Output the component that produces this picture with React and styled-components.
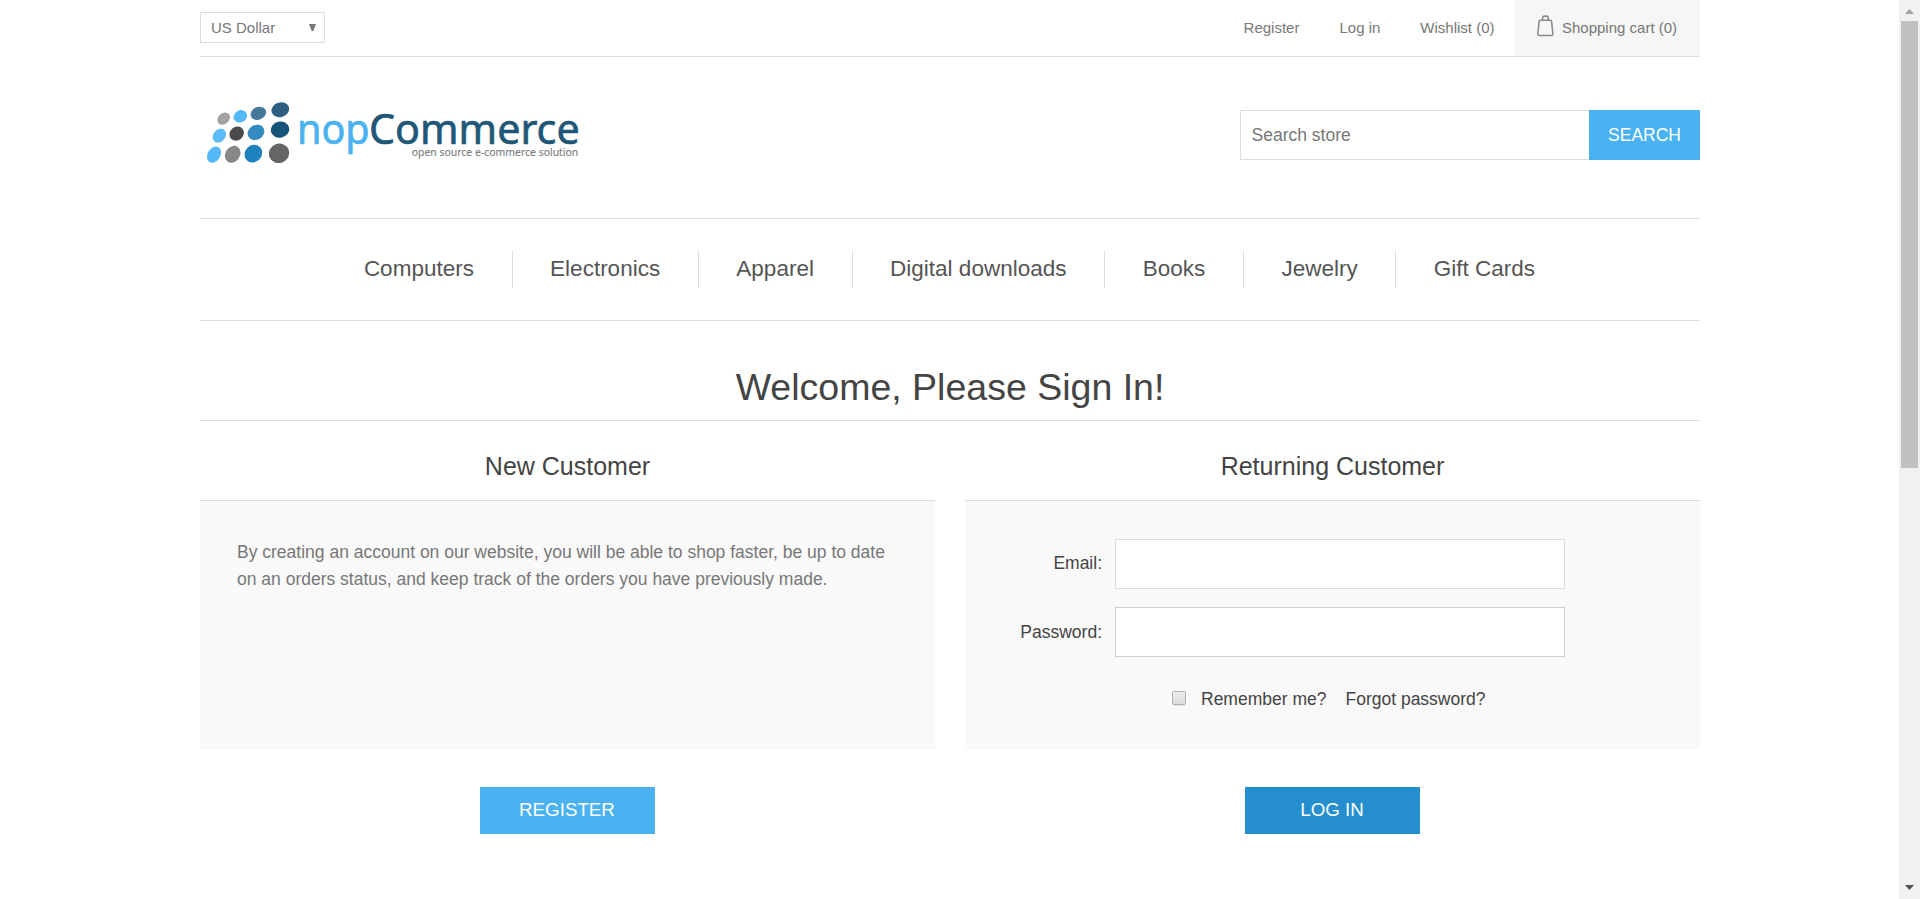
import React from "react";
import styled, { createGlobalStyle } from "styled-components";

const GlobalStyle = createGlobalStyle`
  * { box-sizing: border-box; }
  html, body { margin: 0; padding: 0; overflow: hidden; }
  body {
    background: #fff;
    color: #777;
    font-family: "Liberation Sans", Arial, Helvetica, sans-serif;
    font-size: 17.5px;
  }
  a { color: inherit; text-decoration: none; }
  button, input { font-family: inherit; margin: 0; border-radius: 0; outline: none; }
`;

const Window = styled.div`
  display: flex;
  width: 1920px;
  height: 899px;
  overflow: hidden;
`;

const Viewport = styled.div`
  flex: 1;
  display: flex;
  justify-content: center;
  padding-left: 1px;
`;

const Page = styled.div`
  width: 1500px;
`;

const TopBar = styled.header`
  display: flex;
  justify-content: space-between;
  height: 57px;
  border-bottom: 1px solid #ddd;
  font-size: 15px;
`;

const CurrencySelect = styled.button`
  display: flex;
  align-items: center;
  justify-content: space-between;
  width: 125px;
  height: 31px;
  margin-top: 12px;
  padding: 0 8px 0 10px;
  border: 1px solid #ddd;
  background: #fff;
  color: #777;
  font-size: 15px;
`;

const AccountLinks = styled.nav`
  display: flex;
  line-height: 56px;
`;

const AccountLink = styled.a`
  margin-right: 40px;
  &:nth-child(3) { margin-right: 39.5px; }
`;

const CartLink = styled.a`
  display: flex;
  align-items: center;
  gap: 8px;
  width: 186px;
  margin-left: -20px;
  padding-left: 23px;
  background: #f6f6f6;
  svg { margin-top: -4px; }
`;

const Masthead = styled.div`
  display: flex;
  justify-content: space-between;
  align-items: flex-start;
  height: 161px;
  padding-top: 33px;
`;

const LogoImage = styled.svg`
  display: block;
  overflow: visible;
  font-family: "Noto Sans", "Open Sans", sans-serif;
`;

const SearchForm = styled.div`
  display: flex;
  margin-top: 20px;
`;

const SearchInput = styled.input`
  width: 349px;
  height: 50px;
  padding: 0 10px 0 10.5px;
  border: 1px solid #ddd;
  border-right: 0;
  font-size: 17.5px;
  color: #777;
  &::placeholder { color: #777; opacity: 1; }
`;

const SearchButton = styled.button`
  width: 111px;
  height: 50px;
  padding: 0;
  border: 0;
  background: #4ab2f1;
  color: #fff;
  font-size: 17.5px;
`;

const Menu = styled.nav`
  display: flex;
  justify-content: center;
  align-items: center;
  height: 103px;
  padding-right: 1px;
  border-top: 1px solid #ddd;
  border-bottom: 1px solid #ddd;
`;

const MenuItem = styled.a`
  height: 37px;
  line-height: 36px;
  padding: 0 37.6px;
  color: #555;
  font-size: 22.5px;
  & + & { border-left: 1px solid #ddd; }
`;

const PageTitle = styled.h1`
  height: 100px;
  margin: 0;
  padding-top: 45px;
  border-bottom: 1px solid #ddd;
  color: #444;
  font-size: 37.5px;
  font-weight: normal;
  line-height: 43px;
  text-align: center;
`;

const Columns = styled.main`
  display: flex;
  gap: 30px;
`;

const Column = styled.section`
  display: flex;
  flex-direction: column;
  align-items: center;
  width: 735px;
`;

const ColumnTitle = styled.h2`
  margin: 0;
  height: 79px;
  line-height: 91px;
  color: #444;
  font-size: 25px;
  font-weight: normal;
`;

const Panel = styled.div`
  width: 100%;
  height: 250px;
  padding: 38px 37px 0;
  border-top: 1px solid #ddd;
  background: #f9f9f9;
`;

const Intro = styled.p`
  margin: 0;
  line-height: 27px;
`;

const Field = styled.label`
  display: flex;
  align-items: center;
  height: 50px;
  margin-bottom: 18px;
  color: #444;
`;

const FieldName = styled.span`
  width: 100px;
  margin-right: 13px;
  padding-bottom: ${(p) => p.$lift || 0}px;
  text-align: right;
  white-space: nowrap;
`;

const FieldInput = styled.input`
  width: 450px;
  height: 50px;
  padding: 0 10px;
  border: 1px solid ${(p) => (p.$strong ? "#ccc" : "#ddd")};
  background: #fff;
  font-size: 17.5px;
`;

const LoginOptions = styled.div`
  display: flex;
  align-items: center;
  height: 20px;
  margin-top: 32px;
  padding-left: 170px;
  color: #444;
`;

const Checkbox = styled.span`
  width: 14px;
  height: 14px;
  margin: 0 15px 2px 0;
  border: 1px solid #b2b2b2;
  border-radius: 2px;
  background: linear-gradient(#ededed, #dcdcdc);
  box-shadow: 0 1px 0 #e4e4e4;
`;

const ForgotLink = styled.a`
  margin-left: 19px;
`;

const ActionButton = styled.button`
  width: 175px;
  height: 47px;
  margin-top: 37px;
  padding: 0 1px 1px 0;
  border: 0;
  background: ${(p) => (p.$dark ? "#248ece" : "#4ab2f1")};
  color: #fff;
  font-size: 18.75px;
`;

const ScrollTrack = styled.div`
  display: flex;
  flex-direction: column;
  align-items: center;
  width: 21px;
  background: #f1f1f1;
`;

const ScrollThumb = styled.div`
  width: 17px;
  height: 447px;
  margin-bottom: auto;
  background: #c1c1c1;
`;

const ScrollArrow = styled.svg`
  display: block;
  width: 21px;
  height: 21px;
`;

const dots = [
  [101, 86, 21, 16, -40, "#a0a2a4"],
  [151, 79, 21, 18, -30, "#55b9f8"],
  [205, 70, 24, 19, -25, "#45799c"],
  [271, 59, 27, 22, -18, "#2c5f80"],
  [88, 137, 23, 18, -48, "#5bbcf8"],
  [140, 131, 23, 20, -40, "#4a4a4a"],
  [198, 127, 26, 22, -30, "#338bc2"],
  [270, 119, 28, 24, -12, "#155379"],
  [72, 194, 26, 19, -58, "#55b9f8"],
  [128, 193, 27, 22, -55, "#868789"],
  [190, 191, 28, 25, -45, "#1f82bf"],
  [267, 190, 31, 29, -20, "#646566"],
];

function Logo() {
  return (
    <LogoImage width="390" height="80" viewBox="30 0 1170 240">
      {dots.map(([x, y, rx, ry, angle, fill]) => (
        <ellipse key={`${x}-${y}`} cx={x} cy={y} rx={rx} ry={ry} fill={fill} transform={`rotate(${angle} ${x} ${y})`} />
      ))}
      <text x="321" y="161" fontSize="126" fill="#4ab2f1" stroke="#4ab2f1" strokeWidth="2" textLength="218" lengthAdjust="spacingAndGlyphs">nop</text>
      <text x="537" y="161" fontSize="126" fill="#1f5778" stroke="#1f5778" strokeWidth="2" textLength="632" lengthAdjust="spacingAndGlyphs">Commerce</text>
      <text x="665" y="198" fontSize="34" fill="#7c7f82" stroke="#7c7f82" strokeWidth=".5" textLength="500" lengthAdjust="spacingAndGlyphs">open source e-commerce solution</text>
    </LogoImage>
  );
}

function BagIcon() {
  return (
    <svg width="17" height="22" viewBox="0 0 17 22" fill="none" stroke="#8c8c8c" strokeWidth="1.6" strokeLinejoin="round">
      <path d="M3.2 5.3H13.4Q14.4 5.3 14.5 6.4L15.9 18.6Q16.1 20.5 14.3 20.5H2.5Q.7 20.5 .9 18.6L2.1 6.4Q2.2 5.3 3.2 5.3Z" />
      <path d="M5.6 5.3V3.1Q5.6 1.1 7.6 1.1H9.2Q11.2 1.1 11.2 3.1V5.3" />
    </svg>
  );
}

const categories = ["Computers", "Electronics", "Apparel", "Digital downloads", "Books", "Jewelry", "Gift Cards"];

export default function App() {
  return (
    <Window>
      <GlobalStyle />
      <Viewport>
        <Page>
          <TopBar>
            <CurrencySelect>
              US Dollar
              <svg width="7" height="8" viewBox="0 0 7 8"><path d="M0 0H7L4.3 7H2.7Z" fill="#777" /></svg>
            </CurrencySelect>
            <AccountLinks>
              <AccountLink href="#">Register</AccountLink>
              <AccountLink href="#">Log in</AccountLink>
              <AccountLink href="#">Wishlist (0)</AccountLink>
              <CartLink href="#"><BagIcon />Shopping cart (0)</CartLink>
            </AccountLinks>
          </TopBar>
          <Masthead>
            <Logo />
            <SearchForm>
              <SearchInput placeholder="Search store" />
              <SearchButton>SEARCH</SearchButton>
            </SearchForm>
          </Masthead>
          <Menu>
            {categories.map((name) => <MenuItem key={name} href="#">{name}</MenuItem>)}
          </Menu>
          <PageTitle>Welcome, Please Sign In!</PageTitle>
          <Columns>
            <Column>
              <ColumnTitle>New Customer</ColumnTitle>
              <Panel>
                <Intro>
                  By creating an account on our website, you will be able to shop faster, be up to date on an orders status, and keep track of the orders you have previously made.
                </Intro>
              </Panel>
              <ActionButton>REGISTER</ActionButton>
            </Column>
            <Column>
              <ColumnTitle>Returning Customer</ColumnTitle>
              <Panel>
                <Field><FieldName $lift={2}>Email:</FieldName><FieldInput /></Field>
                <Field><FieldName>Password:</FieldName><FieldInput type="password" $strong /></Field>
                <LoginOptions>
                  <Checkbox />
                  <span>Remember me?</span>
                  <ForgotLink href="#">Forgot password?</ForgotLink>
                </LoginOptions>
              </Panel>
              <ActionButton $dark>LOG IN</ActionButton>
            </Column>
          </Columns>
        </Page>
      </Viewport>
      <ScrollTrack>
        <ScrollArrow viewBox="0 0 21 21"><path d="M6 14L10.5 9L15 14Z" fill="#a3a3a3" /></ScrollArrow>
        <ScrollThumb />
        <ScrollArrow viewBox="0 0 21 21"><path d="M6 7L10.5 12L15 7Z" fill="#505050" /></ScrollArrow>
      </ScrollTrack>
    </Window>
  );
}
